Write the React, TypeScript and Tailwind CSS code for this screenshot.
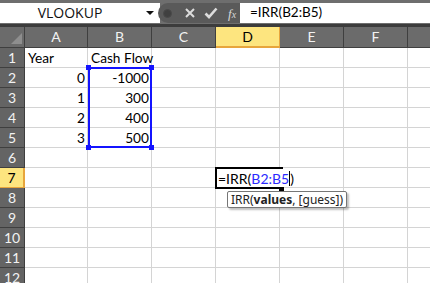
import React from 'react'

const COLS = ['A', 'B', 'C', 'D', 'E', 'F', 'G']
const COL_W = [63, 64, 64, 64, 64, 64, 64]
const ROWS = 12

type Cell = { text: string; align: 'left' | 'right' }

const DATA: Record<string, Cell> = {
  A1: { text: 'Year', align: 'left' },
  B1: { text: 'Cash Flow', align: 'left' },
  A2: { text: '0', align: 'right' },
  B2: { text: '-1000', align: 'right' },
  A3: { text: '1', align: 'right' },
  B3: { text: '300', align: 'right' },
  A4: { text: '2', align: 'right' },
  B4: { text: '400', align: 'right' },
  A5: { text: '3', align: 'right' },
  B5: { text: '500', align: 'right' },
}

function FormulaBar() {
  return (
    <div className="h-[27px] bg-[#6e6e6e] border-b-[3px] border-[#3c3c3c] flex items-start pt-[3px]">
      <div className="w-[160px] h-[20px] bg-white flex items-center relative">
        <span className="w-[140px] text-center text-[14px] text-[#111] font-['Open_Sans',sans-serif] leading-none">
          VLOOKUP
        </span>
        <span className="absolute left-[146px] top-[8px] w-0 h-0 border-l-[4px] border-r-[4px] border-t-[4px] border-l-transparent border-r-transparent border-t-[#111]" />
      </div>
      <div className="w-[82px] h-[20px] bg-[#5a5a5a] rounded-l-[10px] flex items-center relative -ml-[2px]">
        <span className="ml-[5px] w-[9px] h-[9px] rounded-full bg-[#404040] border border-[#4a4a4a]" />
        <svg className="ml-[13px]" width="10" height="10" viewBox="0 0 10 10">
          <path d="M1 1 L9 9 M9 1 L1 9" stroke="#dcdcdc" strokeWidth="2" />
        </svg>
        <svg className="ml-[9px]" width="14" height="12" viewBox="0 0 14 12">
          <path d="M1.5 6.5 L5 10 L12.5 1.5" stroke="#dcdcdc" strokeWidth="2.6" fill="none" />
        </svg>
        <span className="ml-[10px] text-[13px] italic text-[#d8d8d8] font-['Liberation_Serif',serif] leading-none">
          f<span className="text-[10px]">x</span>
        </span>
      </div>
      <div className="flex-1 h-[20px] bg-white flex items-center pl-[10px]">
        <span className="text-[13.5px] text-black font-['Lato',sans-serif] leading-none">=IRR(B2:B5)</span>
      </div>
    </div>
  )
}

function HeaderRow() {
  return (
    <div className="flex h-[21px]">
      <div className="w-[25px] shrink-0 bg-[#6b6b6b] border-r border-b border-[#3f3f3f] relative">
        <svg className="absolute right-[2px] bottom-[3px]" width="11" height="11" viewBox="0 0 11 11">
          <path d="M11 0 L11 11 L0 11 Z" fill="#8e8e8e" />
        </svg>
      </div>
      {COLS.map((c, i) => {
        const sel = c === 'D'
        return (
          <div
            key={c}
            style={{ width: COL_W[i] }}
            className={`shrink-0 flex items-center justify-center text-[14px] font-['Lato',sans-serif] leading-none ${
              sel
                ? 'bg-[#fde57f] text-black border-b-2 border-r border-[#e7a53c]'
                : 'bg-[#6b6b6b] text-[#f2f2f2] border-r border-b border-[#3f3f3f]'
            }`}
          >
            {c}
          </div>
        )
      })}
    </div>
  )
}

function GridRow({ row }: { row: number }) {
  const sel = row === 7
  return (
    <div className="flex h-[20px]">
      <div
        className={`w-[25px] shrink-0 flex items-center justify-center text-[14px] font-['Lato',sans-serif] leading-none ${
          sel
            ? 'bg-[#fde57f] text-black border-r-2 border-b border-[#e7a53c]'
            : 'bg-[#646464] text-[#f2f2f2] border-r border-b border-[#3f3f3f]'
        }`}
      >
        {row}
      </div>
      {COLS.map((c, i) => {
        const cell = DATA[`${c}${row}`]
        return (
          <div
            key={c}
            style={{ width: COL_W[i] }}
            className={`shrink-0 border-r border-b border-[#d4d4d4] flex items-end pb-[2px] text-[13.7px] text-black font-['Lato',sans-serif] leading-none whitespace-nowrap ${
              cell?.align === 'right' ? 'justify-end pr-[2px]' : 'justify-start pl-[3px]'
            }`}
          >
            {cell?.text}
          </div>
        )
      })}
    </div>
  )
}

export default function App() {
  return (
    <div className="w-[430px] h-[283px] overflow-hidden bg-white relative">
      <FormulaBar />
      <HeaderRow />
      {Array.from({ length: ROWS }, (_, i) => (
        <GridRow key={i} row={i + 1} />
      ))}

      {/* rango seleccionado B2:B5 */}
      <div className="absolute left-[88px] top-[67px] w-[64px] h-[81px] border-2 border-[#1414ff]">
        <span className="absolute -left-[4px] -top-[4px] w-[5px] h-[5px] bg-[#1414ff]" />
        <span className="absolute -right-[4px] -top-[4px] w-[5px] h-[5px] bg-[#1414ff]" />
        <span className="absolute -left-[4px] -bottom-[4px] w-[5px] h-[5px] bg-[#1414ff]" />
        <span className="absolute -right-[4px] -bottom-[4px] w-[5px] h-[5px] bg-[#1414ff]" />
      </div>

      {/* celda en edición D7 */}
      <div className="absolute left-[215px] top-[167px] w-[68px] h-[22px] border-l-2 border-t-2 border-b-2 border-black bg-white">
        <div className="absolute left-[1px] top-[2px] flex items-center text-[14px] font-['Lato',sans-serif] leading-none whitespace-nowrap">
          <span className="text-black">=IRR(</span>
          <span className="text-[#2a2aff]">B2:B5</span>
          <span className="w-px h-[15px] bg-black" />
          <span className="text-black">)</span>
        </div>
        <span className="absolute right-[-1px] bottom-[-4px] w-[5px] h-[4px] bg-black" />
      </div>

      {/* tooltip */}
      <div className="absolute left-[227px] top-[191px] h-[17px] px-[3px] bg-white border border-[#767676] rounded-[2px] shadow-[2px_2px_2px_rgba(0,0,0,0.25)] flex items-center text-[12px] text-[#222] font-['Noto_Sans',sans-serif] leading-none whitespace-nowrap">
        IRR(<span className="font-bold">values</span>, [guess])
      </div>
    </div>
  )
}
